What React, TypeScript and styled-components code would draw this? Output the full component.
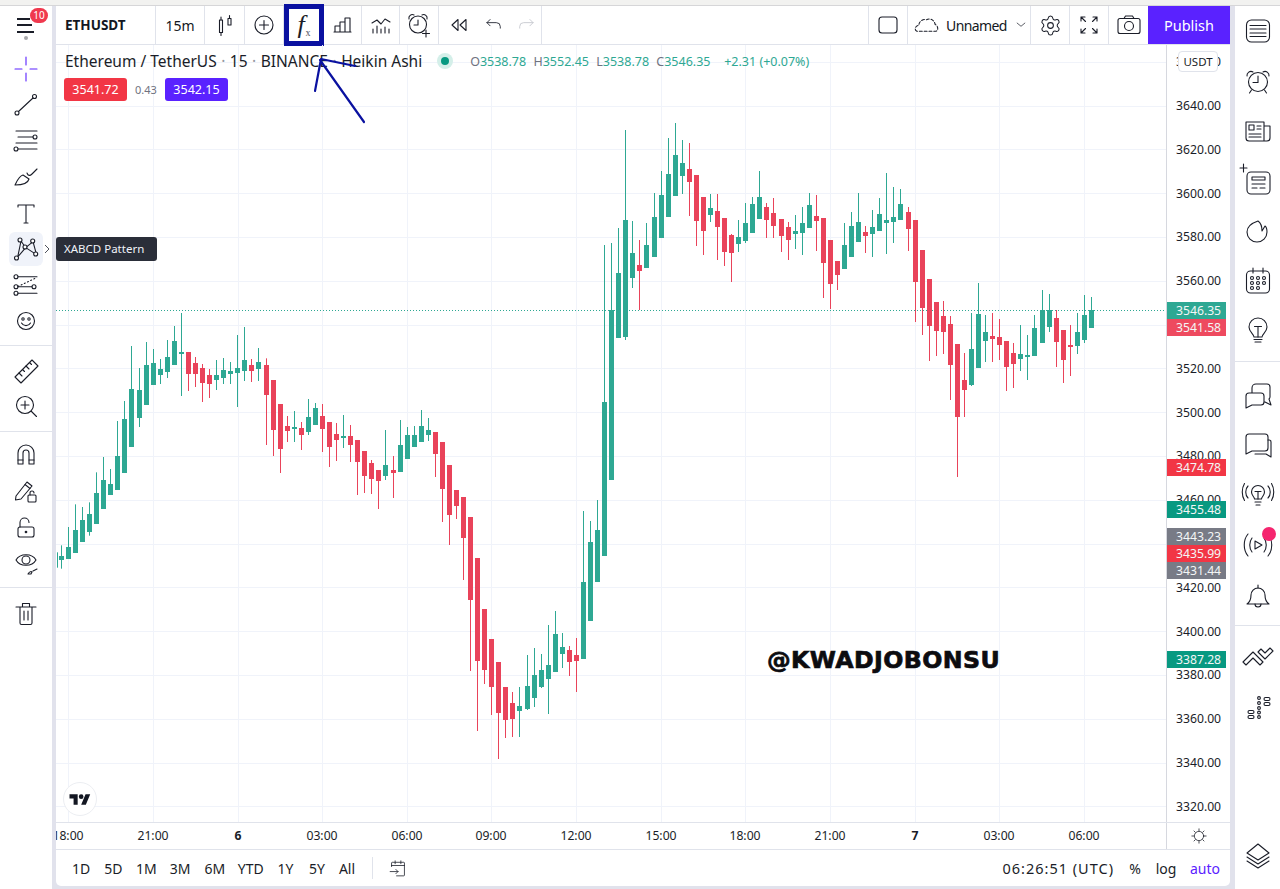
import React from "react";
import styled, { createGlobalStyle } from "styled-components";
import { Settings } from "lucide-react";

const Global = createGlobalStyle`
  html, body { margin: 0; padding: 0; background: #fff; }
  * { box-sizing: border-box; }
  body { font-family: "Noto Sans", "Open Sans", sans-serif; color: #131722; }
`;

const INK = "#1a1d28";
const GREEN = "#2ea893";
const RED = "#e9435a";

type Row = [number, number, number, number, number, number];
const seg = (ox: number, oy: number, rows: Row[]) =>
  rows.map(([x, h, t, b, l, d]) => ({
    x: Math.round(ox + x / 3),
    h: oy + h / 3,
    t: oy + t / 3,
    b: oy + b / 3,
    l: oy + l / 3,
    up: d === 1,
  }));

const candles = [
  ...seg(0, 380, [
    [170, 517, 540, 540, 563, 1], [184, 496, 528, 540, 566, 1], [205, 441, 501, 537, 537, 1], [226, 373, 450, 519, 519, 1],
    [247, 381, 420, 486, 486, 1], [268, 367, 402, 456, 467, 1], [289, 277, 339, 432, 432, 1], [310, 231, 300, 387, 387, 1],
    [331, 267, 312, 345, 345, 1], [352, 123, 228, 330, 330, 1],
  ]),
  ...seg(50, 300, [
    [223, 303, 357, 519, 519, 1], [244, 138, 267, 441, 441, 1], [268, 204, 270, 354, 381, 1], [289, 126, 195, 315, 315, 1],
    [310, 147, 189, 255, 255, 1], [331, 177, 207, 225, 252, 1], [352, 120, 171, 216, 234, 1], [373, 78, 123, 195, 195, 1],
    [394, 39, 156, 162, 288, 1], [415, 156, 156, 222, 273, 0], [436, 171, 189, 222, 261, 0], [457, 192, 204, 249, 306, 0],
    [478, 207, 225, 252, 294, 0], [499, 180, 225, 240, 270, 1], [520, 174, 210, 234, 252, 1], [541, 186, 213, 222, 252, 1],
    [562, 105, 204, 219, 321, 1], [583, 81, 180, 213, 243, 1], [604, 177, 195, 213, 246, 0], [625, 144, 186, 207, 243, 1],
    [649, 175, 195, 285, 435, 0], [670, 240, 240, 390, 468, 0], [691, 312, 312, 447, 519, 0], [712, 348, 378, 393, 426, 0],
    [733, 333, 381, 387, 426, 1], [754, 366, 384, 405, 450, 0], [775, 297, 351, 396, 405, 1], [796, 309, 324, 375, 375, 1],
    [817, 312, 348, 387, 456, 0], [838, 366, 366, 441, 501, 0], [859, 369, 402, 420, 483, 0], [880, 345, 408, 414, 444, 1],
  ]),
  ...seg(350, 400, [
    [1, 75, 108, 135, 186, 0], [22, 120, 120, 186, 285, 0], [43, 153, 153, 228, 279, 0], [64, 180, 189, 237, 282, 0],
    [85, 210, 210, 243, 327, 0], [106, 90, 195, 228, 240, 1], [130, 168, 210, 219, 294, 0], [151, 60, 135, 216, 216, 1],
    [172, 81, 105, 177, 177, 1], [193, 78, 105, 141, 141, 1], [214, 30, 78, 126, 126, 1], [235, 54, 90, 105, 123, 1],
    [256, 96, 96, 162, 231, 0], [277, 126, 126, 267, 366, 0], [298, 195, 195, 345, 435, 0], [319, 270, 270, 318, 357, 0],
    [340, 291, 291, 414, 540, 0], [361, 351, 351, 600, 813, 0], [382, 474, 474, 783, 993, 0], [403, 627, 627, 810, 852, 0],
    [424, 717, 717, 861, 945, 0], [445, 786, 786, 939, 1077, 0], [466, 861, 861, 960, 1014, 0], [487, 876, 909, 957, 1011, 0],
    [508, 861, 918, 933, 1011, 1], [532, 765, 858, 927, 930, 1], [553, 744, 825, 894, 921, 1], [574, 762, 810, 861, 864, 1],
    [595, 675, 795, 837, 942, 1], [616, 633, 702, 816, 816, 1], [637, 699, 741, 762, 804, 1], [658, 738, 750, 786, 828, 0],
    [679, 714, 765, 783, 876, 0], [700, 333, 546, 777, 777, 1], [721, 363, 426, 663, 663, 1], [742, 300, 390, 546, 546, 1],
  ]),
  ...seg(600, 110, [
    [13, 405, 876, 1338, 1338, 1], [34, 399, 600, 1110, 1110, 1], [55, 354, 489, 684, 684, 1], [76, 60, 330, 681, 690, 1],
    [97, 333, 429, 504, 534, 1], [118, 390, 465, 483, 600, 0], [139, 339, 405, 474, 474, 1], [163, 249, 321, 441, 441, 1],
    [184, 183, 255, 384, 384, 1], [205, 84, 192, 321, 321, 1], [226, 39, 135, 258, 258, 1], [247, 90, 159, 198, 252, 1],
    [268, 99, 177, 216, 318, 0], [289, 195, 195, 333, 408, 0], [310, 261, 261, 363, 435, 0], [331, 252, 294, 315, 336, 1],
    [352, 252, 303, 351, 450, 0], [373, 324, 324, 426, 468, 0], [394, 372, 375, 429, 516, 0], [415, 330, 381, 402, 426, 1],
    [436, 279, 339, 393, 399, 1], [457, 261, 282, 369, 369, 1], [478, 183, 261, 327, 327, 1], [499, 279, 291, 330, 384, 0],
    [520, 264, 309, 348, 384, 0], [544, 327, 327, 378, 426, 0], [565, 336, 351, 390, 450, 0], [586, 315, 363, 372, 417, 1],
    [607, 291, 339, 369, 435, 1], [628, 249, 285, 354, 354, 1], [649, 255, 318, 333, 423, 0], [670, 324, 324, 459, 564, 0],
    [691, 390, 390, 522, 597, 0], [712, 453, 453, 495, 540, 0], [733, 339, 405, 477, 477, 1], [754, 306, 348, 441, 441, 1],
    [775, 249, 336, 396, 396, 1], [796, 348, 366, 378, 429, 0], [817, 300, 351, 372, 441, 1], [838, 264, 312, 363, 363, 1],
    [859, 189, 330, 339, 432, 1], [880, 231, 321, 336, 399, 1], [901, 237, 282, 330, 330, 1], [925, 291, 306, 357, 423, 0],
    [946, 330, 330, 516, 636, 0],
  ]),
  ...seg(900, 270, [
    [67, -60, -60, 114, 195, 0], [88, 27, 27, 168, 273, 0], [109, 96, 96, 183, 258, 0], [130, 93, 138, 186, 252, 0],
    [151, 138, 162, 285, 390, 0], [172, 222, 222, 441, 621, 0], [193, 249, 330, 360, 441, 0], [214, 129, 237, 345, 348, 1],
    [235, 39, 132, 294, 294, 1], [256, 135, 186, 213, 276, 1], [277, 129, 198, 207, 276, 0], [298, 147, 201, 225, 270, 0],
    [319, 213, 213, 291, 363, 0], [340, 219, 249, 282, 354, 0], [361, 165, 252, 267, 303, 1], [382, 195, 255, 261, 330, 1],
    [403, 135, 174, 258, 258, 1], [427, 60, 120, 219, 219, 1], [448, 72, 120, 171, 186, 1], [469, 120, 144, 216, 291, 0],
    [490, 180, 180, 270, 339, 0], [511, 165, 225, 231, 318, 0], [532, 129, 186, 228, 252, 1], [553, 75, 135, 210, 219, 1],
    [574, 81, 120, 174, 174, 1],
  ]),
];

const priceY = (p: number) => 105.5 + ((3640 - p) / 20) * 43.8;
const gridPrices = [3660, 3640, 3620, 3600, 3580, 3560, 3540, 3520, 3500, 3480, 3460, 3440, 3420, 3400, 3380, 3360, 3340, 3320];
const prices = gridPrices.filter((p) => p !== 3540 && p !== 3440);
const times: [string, number, boolean][] = [
  ["18:00", 68, false], ["21:00", 153, false], ["6", 238, true], ["03:00", 322, false], ["06:00", 407, false],
  ["09:00", 491, false], ["12:00", 576, false], ["15:00", 661, false], ["18:00", 745, false], ["21:00", 830, false],
  ["7", 915, true], ["03:00", 999, false], ["06:00", 1084, false],
];
const badges: [string, number, string][] = [
  ["3546.35", 302, "#2ea893"], ["3541.58", 319, "#ee4a5f"], ["3474.78", 459, "#f23645"], ["3455.48", 501, "#089981"],
  ["3443.23", 528, "#787b86"], ["3435.99", 545, "#f23645"], ["3431.44", 562, "#787b86"], ["3387.28", 651, "#089981"],
];

const Page = styled.div`
  position: relative;
  width: 1280px;
  height: 889px;
  overflow: hidden;
  display: flex;
  flex-direction: column;
  background: #fff;
`;
const TopStrip = styled.div`
  height: 6px;
  flex: none;
  background: #f2f2f0;
  border-bottom: 1px solid #d6d6d8;
`;
const Columns = styled.div`
  flex: 1;
  display: flex;
  min-height: 0;
`;
const LeftBar = styled.aside`
  width: 52px;
  flex: none;
  display: flex;
  flex-direction: column;
  background: #fff;
`;
const MenuCell = styled.div`
  position: relative;
  height: 39px;
  display: flex;
  align-items: center;
  justify-content: flex-start;
  padding-left: 17px;
`;
const Burger = styled.div`
  display: flex;
  flex-direction: column;
  gap: 4.5px;
  margin-top: -1px;
  span {
    display: block;
    height: 2px;
    background: ${INK};
  }
  span:nth-child(1) { width: 13px; }
  span:nth-child(2) { width: 15px; }
  span:nth-child(3) { width: 17px; }
`;
const CountBadge = styled.span`
  position: absolute;
  left: 30px;
  top: 2px;
  width: 18px;
  height: 15px;
  border-radius: 8px;
  background: #f0384e;
  color: #fff;
  font-size: 10px;
  line-height: 15px;
  text-align: center;
`;
const GrayDot = styled.span`
  position: absolute;
  left: 24px;
  top: 30px;
  width: 4px;
  height: 4px;
  border-radius: 50%;
  background: #a8a8ac;
`;
const ToolGroup = styled.div<{ $top: number; $bottom: number; $line?: boolean }>`
  padding: ${(p) => p.$top}px 0 ${(p) => p.$bottom}px;
  border-bottom: ${(p) => (p.$line ? "1px solid #e0e3eb" : "none")};
`;
const ToolCell = styled.div<{ $active?: boolean }>`
  position: relative;
  height: 36px;
  display: flex;
  align-items: center;
  justify-content: center;
  &::before {
    content: "";
    position: absolute;
    left: 9px;
    top: 1px;
    width: 34px;
    height: 34px;
    border-radius: 6px;
    background: ${(p) => (p.$active ? "#f0f3fa" : "transparent")};
  }
  svg { position: relative; }
`;
const ToolArrow = styled.svg`
  position: absolute !important;
  left: 44px;
  top: 13px;
  width: 6px;
  height: 10px;
  fill: none;
  stroke: #50535e;
  stroke-width: 1;
`;
const Center = styled.div`
  flex: 1;
  display: flex;
  flex-direction: column;
  min-width: 0;
  padding: 0 5px 3px 4px;
  background: #e1e2ec;
`;
const TopBar = styled.header`
  height: 39px;
  flex: none;
  display: flex;
  align-items: stretch;
  background: #fff;
  border-bottom: 1px solid #e0e3eb;
`;
const BarCell = styled.div<{ $w: number; $plain?: boolean }>`
  position: relative;
  width: ${(p) => p.$w}px;
  flex: none;
  display: flex;
  align-items: center;
  justify-content: center;
  font-size: 14px;
  border-right: ${(p) => (p.$plain ? "none" : "1px solid #e0e3eb")};
`;
const LayoutCell = styled(BarCell)`
  justify-content: flex-start;
  gap: 5px;
  padding-left: 6px;
  letter-spacing: -0.6px;
`;
const Symbol = styled.span`
  font-weight: 700;
  font-size: 13.5px;
  width: 100%;
  padding-left: 9px;
`;
const Marker = styled.div`
  position: absolute;
  left: 0;
  right: 0;
  top: -2px;
  bottom: -2px;
  border: 5px solid #0a11a0;
`;
const Fx = styled.span`
  font-family: "Liberation Serif", serif;
  font-style: italic;
  font-size: 26px;
  line-height: 1;
  display: flex;
  align-items: flex-end;
  color: ${INK};
  small {
    font-style: normal;
    font-size: 10px;
    margin-left: 1px;
    color: #50535e;
  }
`;
const Spacer = styled.div`
  flex: 1;
  border-right: 1px solid #e0e3eb;
`;
const Publish = styled.div`
  width: 82px;
  flex: none;
  background: #5a22ff;
  color: #fff;
  font-size: 14.5px;
  display: flex;
  align-items: center;
  justify-content: center;
`;
const ChartRow = styled.div`
  height: 777px;
  flex: none;
  display: flex;
  background: #fff;
`;
const ChartPane = styled.div`
  position: relative;
  width: 1110px;
  flex: none;
  overflow: hidden;
`;
const ChartSvg = styled.svg`
  display: block;
  width: 1110px;
  height: 777px;
`;
const Legend = styled.div`
  position: absolute;
  left: 9px;
  top: 5px;
  height: 22px;
  display: flex;
  align-items: center;
  font-size: 15.5px;
  color: #1a1d28;
  white-space: nowrap;
`;
const Sep = styled.span`
  color: #9598a1;
  margin: 0 4.5px;
`;
const LiveDot = styled.span`
  width: 8px;
  height: 8px;
  border-radius: 50%;
  background: #089981;
  box-shadow: 0 0 0 4px #d4efe9;
  margin: 0 21px 0 19px;
`;
const Ohlc = styled.span`
  font-size: 12.5px;
  color: #2ea893;
  b { font-weight: 400; color: #6f7280; margin-left: 4px; }
  b:first-child { margin-left: 0; }
  i { font-style: normal; margin-left: 10.5px; }
`;
const QuoteRow = styled.div`
  position: absolute;
  left: 8px;
  top: 33px;
  display: flex;
  align-items: center;
`;
const Quote = styled.span<{ $bg: string }>`
  width: 63px;
  height: 23px;
  border-radius: 3px;
  background: ${(p) => p.$bg};
  color: #fff;
  font-size: 12.5px;
  line-height: 23px;
  text-align: center;
`;
const Spread = styled.span`
  width: 38px;
  text-align: center;
  font-size: 11px;
  color: #6f7280;
`;
const Watermark = styled.div`
  position: absolute;
  left: 711px;
  top: 600px;
  font-family: "DejaVu Sans", sans-serif;
  font-weight: 700;
  font-size: 23.7px;
  line-height: 30px;
  letter-spacing: 0.4px;
  color: #0c0c10;
  -webkit-text-stroke: 0.7px #0c0c10;
  white-space: nowrap;
`;
const LogoRound = styled.div`
  position: absolute;
  left: 7px;
  top: 737px;
  width: 34px;
  height: 34px;
  border-radius: 50%;
  background: #fff;
  border: 1px solid #eceef2;
  display: flex;
  align-items: center;
  justify-content: center;
`;
const Tip = styled.div`
  position: absolute;
  left: 0;
  top: 192px;
  width: 101px;
  height: 24px;
  background: #2a2e39;
  border-radius: 3px;
  color: #f0f3fa;
  font-size: 11.5px;
  line-height: 24px;
  padding-left: 8px;
  &::before {
    content: "";
    position: absolute;
    left: -4px;
    top: 8px;
    border-top: 4px solid transparent;
    border-bottom: 4px solid transparent;
    border-right: 4px solid #2a2e39;
  }
`;
const PriceAxis = styled.div`
  position: relative;
  flex: 1;
  border-left: 1px solid #d6d8df;
  overflow: hidden;
`;
const PriceTick = styled.span`
  position: absolute;
  left: 9px;
  font-size: 12.2px;
  line-height: 16px;
  color: ${INK};
`;
const PriceTag = styled.span<{ $bg: string }>`
  position: absolute;
  left: -1px;
  width: 60px;
  height: 17px;
  background: ${(p) => p.$bg};
  color: #f4f6f6;
  font-size: 12.2px;
  line-height: 17px;
  padding-left: 10px;
`;
const UnitButton = styled.span`
  position: absolute;
  left: 11px;
  top: 6px;
  width: 40px;
  height: 21px;
  background: #fff;
  border: 1px solid #e0e3eb;
  border-radius: 4px;
  font-size: 11.5px;
  line-height: 19px;
  text-align: center;
  color: ${INK};
`;
const TimeRow = styled.div`
  height: 27px;
  flex: none;
  display: flex;
  background: #fff;
  border-top: 1px solid #e0e3eb;
`;
const TimeScale = styled.div`
  position: relative;
  width: 1110px;
  flex: none;
  overflow: hidden;
`;
const TimeTick = styled.span<{ $bold: boolean }>`
  position: absolute;
  top: 5px;
  transform: translateX(-50%);
  font-size: 12.2px;
  line-height: 16px;
  font-weight: ${(p) => (p.$bold ? 700 : 400)};
  color: ${INK};
`;
const AxisCorner = styled.div`
  flex: 1;
  border-left: 1px solid #d6d8df;
  display: flex;
  align-items: center;
  justify-content: center;
`;
const BottomBar = styled.footer`
  flex: 1;
  display: flex;
  align-items: center;
  padding-left: 9px;
  background: #fff;
  border-top: 1px solid #e0e3eb;
  border-bottom-left-radius: 5px;
  border-bottom-right-radius: 5px;
  font-size: 14px;
  color: ${INK};
`;
const Range = styled.span<{ $w: number }>`
  width: ${(p) => p.$w}px;
  text-align: center;
`;
const BarRule = styled.span`
  width: 1px;
  height: 22px;
  margin-left: 10px;
  background: #e0e3eb;
`;
const BottomIcon = styled.span`
  margin-left: 15px;
  display: flex;
`;
const Clock = styled.span`
  margin-left: auto;
  margin-right: 4px;
  font-size: 14.5px;
  letter-spacing: 1px;
`;
const ScaleMode = styled.span<{ $w: number; $on?: boolean }>`
  width: ${(p) => p.$w}px;
  text-align: center;
  color: ${(p) => (p.$on ? "#5a22ff" : INK)};
`;
const RightBar = styled.aside`
  width: 45px;
  flex: none;
  display: flex;
  flex-direction: column;
  background: #fff;
`;
const SideGroup = styled.div<{ $top: number; $bottom: number; $line?: boolean }>`
  padding: ${(p) => p.$top}px 0 ${(p) => p.$bottom}px;
  border-bottom: ${(p) => (p.$line ? "1px solid #e0e3eb" : "none")};
`;
const SideFoot = styled.div`
  margin-top: auto;
  padding-bottom: 9px;
`;
const SideCell = styled.div`
  position: relative;
  height: 50px;
  display: flex;
  align-items: center;
  justify-content: center;
`;
const PinkDot = styled.span`
  position: absolute;
  left: 27px;
  top: 7px;
  width: 14px;
  height: 14px;
  border-radius: 50%;
  background: #f5256f;
`;
const ArrowsOverlay = styled.svg`
  position: absolute;
  left: 0;
  top: 0;
  width: 1280px;
  height: 889px;
  pointer-events: none;
  fill: none;
  stroke: #0a11a0;
  stroke-width: 2.2;
  stroke-linecap: round;
`;
const Glyph = styled.svg<{ $s?: number; $tone?: string }>`
  width: ${(p) => p.$s ?? 28}px;
  height: ${(p) => p.$s ?? 28}px;
  flex: none;
  overflow: visible;
  fill: none;
  stroke: ${(p) => p.$tone ?? INK};
  stroke-width: 1.1;
  stroke-linecap: round;
  stroke-linejoin: round;
`;

const I: React.FC<{ children: React.ReactNode; s?: number; tone?: string }> = ({ children, s, tone }) => (
  <Glyph viewBox="0 0 28 28" $s={s} $tone={tone}>
    {children}
  </Glyph>
);

const leftTop = [
  <I tone="#5a22ff"><path d="M14 2v8M14 18v8M3 14h7M18 14h7" /></I>,
  <I><circle cx="5" cy="22" r="2" /><circle cx="22.5" cy="5.5" r="2" /><path d="M6.5 20.5 21 7" /></I>,
  <I><path d="M4 4h21M6 10h15M4 16h21M6 22h19" /><circle cx="23" cy="10" r="2" /><circle cx="4" cy="22" r="2" /></I>,
  <I><path d="M3 22c2-4 4-9 8-10l6 4c-1 4-7 6-14 6Z" /><path d="M15 10c1 3 3 3 5 1l5-5" /></I>,
  <I><path d="M6 8V6h16v2M14 6v18M12 24h4" /></I>,
  <I><path d="M5.7 22 9 6l4.7 6.7L21 6.6l3.5 13-10.8-7L5.7 22Z" /><circle cx="4.5" cy="23" r="2" fill="#fff" /><circle cx="8" cy="5" r="2" fill="#fff" /><circle cx="20.7" cy="6" r="2" fill="#fff" /><circle cx="13" cy="12" r="2" fill="#fff" /><circle cx="23.7" cy="19" r="2" fill="#fff" /></I>,
  <I><path d="M6 5.7h19M6 15.7h14M6 22.3h19" /><path d="M6 15.5 24 7" strokeDasharray="1 2.5" /><circle cx="4" cy="5.7" r="2" /><circle cx="4" cy="15.7" r="2" /><circle cx="4" cy="22.3" r="2" /><circle cx="22" cy="15.7" r="2" /></I>,
  <I><circle cx="14" cy="14" r="8.5" /><circle cx="11" cy="12" r="1.2" /><circle cx="17" cy="12" r="1.2" /><path d="M9.5 16c2 3.5 7 3.5 9 0" /></I>,
];
const leftMid = [
  <I><path d="M3 20 20 3l6 6L9 26Z" /><path d="M7 16l3 3M10.5 12.5l2 2M14 9l3 3M17.5 5.5l2 2" /></I>,
  <I><circle cx="13" cy="12" r="8.5" /><path d="M13 8v8M9 12h8M19.5 18.5l5 5" /></I>,
];
const leftLow = [
  <I><path d="M6 23V12a8 8 0 0 1 16 0v11h-5V12a3 3 0 0 0-6 0v11Z" /><path d="M6 19h5M17 19h5" /></I>,
  <I><path d="M4 19 15 5l5 4L9 22l-5.500 1Z" /><path d="M13 7.500l5 4" /><rect x="16" y="18" width="8" height="7" rx="1" fill="#fff" /><path d="M18 18v-2a2 2 0 0 1 4 0" /></I>,
  <I><rect x="6" y="14" width="16" height="10" rx="2" /><path d="M8 14V9.500a4.500 4.500 0 0 1 9 0" /><circle cx="14" cy="19" r="0.8" fill={INK} /></I>,
  <I><path d="M4 11c4-7 16-7 20 0-4 7-16 7-20 0Z" /><circle cx="14" cy="11" r="4" /><path d="M16 25c1-2 3-3 4-2l-1 2ZM21 22l4-2" /></I>,
];
const rightTop = [
  <I><rect x="2.500" y="3" width="23" height="22" rx="5" /><path d="M6 8.500h16M6 12h16M6 16h16M6 19.500h16" /></I>,
  <I><circle cx="14" cy="15" r="9.500" /><path d="M14 9v6.500H9M3 9a4 4 0 0 1 6-4M25 9a4 4 0 0 0-6-4M7.500 23l-2 3M20.500 23l2 3" /></I>,
  <I><path d="M2 5h18v19H5a3 3 0 0 1-3-3ZM20 9h6v12a3 3 0 0 1-3 3h-3" /><rect x="5" y="8" width="5" height="5" /><path d="M13 9h4M13 12h4M5 17h12M5 20h12" /></I>,
  <I><rect x="3" y="5" width="23" height="22" rx="4" /><path d="M8 10h13v3H8ZM8 17h13M8 21h5M16 21h5M-4 1h7M-.5 -3v8" /></I>,
  <I><path d="M14 4c-6 2-11 5-11 11a10 10 0 0 0 20 0c0-2-.6-5-2-6l-3 5c0-4-1-8-4-10Z" /></I>,
  <I><rect x="2.500" y="4" width="23" height="22" rx="4" /><path d="M9 1v5M19 1v5" /><circle cx="8" cy="11" r="1.500" /><circle cx="14" cy="11" r="1.500" /><circle cx="20" cy="11" r="1.500" /><circle cx="8" cy="16" r="1.500" /><circle cx="14" cy="16" r="1.500" /><circle cx="20" cy="16" r="1.500" /><circle cx="8" cy="21" r="1.500" /><circle cx="14" cy="21" r="1.500" /></I>,
  <I><path d="M10 20c0-3-5-5-5-10a9 9 0 0 1 18 0c0 5-5 7-5 10Z" /><path d="M10.500 9.500h7M14 9.500V20M10 22.500h8M11 25h6" /></I>,
];
const rightMid = [
  <I><path d="M8 12V7a4 4 0 0 1 4-4h11a3 3 0 0 1 3 3v10a3 3 0 0 1-1 2l2 6-6-3H12" /><path d="M2 15a3 3 0 0 1 3-3h12a3 3 0 0 1 3 3v6a3 3 0 0 1-3 3H8l-6 3Z" fill="#fff" /></I>,
  <I><path d="M8 20h13a3 3 0 0 0 3-3V6a3 3 0 0 0-3-3H5a3 3 0 0 0-3 3v17l6-3" /><path d="M24 9h1a2 2 0 0 1 2 2v15l-5-3H11" /></I>,
  <I><path d="M10.500 17c0-2-3-3.500-3-7a6.500 6.500 0 0 1 13 0c0 3.500-3 5-3 7Z" transform="translate(0 1)" /><path d="M11 10.500h6M14 10.500V18M11 21h6M12 24h4M4 5c-3 3-3 9 0 12M0.500 2.500c-3 5-3 12 0 17M24 5c3 3 3 9 0 12M27.500 2.500c3 5 3 12 0 17" /></I>,
  <I><path d="M11 10v8l7-4ZM4 3C-1 9-1 19 4 25M8 7c-3 4-3 10 0 14M24 3c5 6 5 16 0 22M20 7c3 4 3 10 0 14" /></I>,
  <I><path d="M3 23h22c-3-2-4-5-4-9a7 7 0 0 0-14 0c0 4-1 7-4 9Z" /><path d="M11 23a3 3 0 0 0 6 0M14 7V4" /></I>,
];
const rightLow = [
  <I><path d="M-1 18 9 8l10 10-3 3-7-7-7 7ZM14 8l3-3 4 4 5-5 3 3-8 8Z" /></I>,
  <I><rect x="4" y="16.500" width="6" height="3" rx="1.500" /><rect x="4" y="21.500" width="6" height="3" rx="1.500" /><circle cx="15" cy="4" r="1.400" /><circle cx="15" cy="9" r="1.400" /><circle cx="15" cy="14" r="1.400" /><circle cx="15" cy="18.500" r="1.400" /><circle cx="15" cy="23" r="1.400" /><rect x="20" y="3.500" width="6" height="3" rx="1.500" /><rect x="20" y="8.500" width="6" height="3" rx="1.500" /></I>,
];

const ranges: [string, number][] = [
  ["1D", 32], ["5D", 32.5], ["1M", 33.5], ["3M", 34], ["6M", 35.5], ["YTD", 36.5], ["1Y", 33], ["5Y", 30], ["All", 30],
];

export default function App() {
  return (
    <Page>
      <Global />
      <TopStrip />
      <Columns>
        <LeftBar>
          <MenuCell>
            <Burger><span /><span /><span /></Burger>
            <CountBadge>10</CountBadge>
            <GrayDot />
          </MenuCell>
          <ToolGroup $top={6} $bottom={6} $line>
            {leftTop.map((ic, i) => (
              <ToolCell key={i} $active={i === 5}>
                {ic}
                {i === 5 && (
                  <ToolArrow viewBox="0 0 6 10"><path d="M1 1l4 4-4 4" /></ToolArrow>
                )}
              </ToolCell>
            ))}
          </ToolGroup>
          <ToolGroup $top={7} $bottom={6} $line>
            {leftMid.map((ic, i) => <ToolCell key={i}>{ic}</ToolCell>)}
          </ToolGroup>
          <ToolGroup $top={5} $bottom={6} $line>
            {leftLow.map((ic, i) => <ToolCell key={i}>{ic}</ToolCell>)}
          </ToolGroup>
          <ToolGroup $top={7} $bottom={0}>
            <ToolCell>
              <I><path d="M4 8h20M8 8v16a1.500 1.500 0 0 0 1.500 1.500h9A1.500 1.500 0 0 0 20 24V8M10.500 8V4.500h7V8M12 12v9M16 12v9" /></I>
            </ToolCell>
          </ToolGroup>
        </LeftBar>
        <Center>
          <TopBar>
            <BarCell $w={100}><Symbol>ETHUSDT</Symbol></BarCell>
            <BarCell $w={49}>15m</BarCell>
            <BarCell $w={40}><I><path d="M10 6v3M18.500 4.500v3M10 21.500v3" /><rect x="8.500" y="9" width="3" height="12.500" /><rect x="17" y="7.500" width="3" height="6.500" /></I></BarCell>
            <BarCell $w={39}><I><circle cx="14" cy="14" r="9" /><path d="M14 9.500v9M9.500 14h9" /></I></BarCell>
            <BarCell $w={40} $plain><Fx>f<small>x</small></Fx><Marker /></BarCell>
            <BarCell $w={38}><I><path d="M6 21v-6h5v6M11 21V11h5v10M16 21V7h5v14M5 21h17" /></I></BarCell>
            <BarCell $w={38}><I><path d="M5 12l5-3 4 4 4-5 5 3M6 18v4M10 15v7M14 18v4M18 16v6M22 18v4" /></I></BarCell>
            <BarCell $w={39}><I><circle cx="13" cy="13.500" r="8.500" /><path d="M13 9v5H9M4 8a3.500 3.500 0 0 1 5-4M22 8a3.500 3.500 0 0 0-5-4M21 19v7M17.500 22.500h7" /></I></BarCell>
            <BarCell $w={39} $plain><I><path d="M13 8.500 7 14l6 5.500ZM21 8.500 15 14l6 5.500Z" /></I></BarCell>
            <BarCell $w={32} $plain><I s={22}><path d="M9 7 5 11l4 4M5 11h12a5 5 0 0 1 5 5v2" /></I></BarCell>
            <BarCell $w={32}><I s={22} tone="#c3c5cc"><path d="M19 7l4 4-4 4M23 11H11a5 5 0 0 0-5 5v2" /></I></BarCell>
            <Spacer />
            <BarCell $w={39}><I><rect x="5" y="6" width="18" height="16" rx="3" /></I></BarCell>
            <LayoutCell $w={123}>
              <I s={27}><path d="M3 20c-3-1-2-6 2-6 0-4 4-7 8-6 3-2 8 0 9 5 3 1 4 7 0 7H3Z" strokeDasharray="3 2" /></I>
              <span>Unnamed</span>
              <I s={18}><path d="M8 11l6 5 6-5" /></I>
            </LayoutCell>
            <BarCell $w={39}><Settings size={23} strokeWidth={1.1} color={INK} /></BarCell>
            <BarCell $w={39}><I><path d="M6 10V6h4M6 6l4.500 4.500M22 10V6h-4M22 6l-4.500 4.500M6 18v4h4M6 22l4.500-4.500M22 18v4h-4M22 22l-4.500-4.500" /></I></BarCell>
            <BarCell $w={39} $plain><I><rect x="3" y="7.500" width="22" height="15" rx="2" /><circle cx="14" cy="15" r="4.500" /><path d="M9 7.500l1.500-2.500h7L19 7.500" /></I></BarCell>
            <Publish>Publish</Publish>
          </TopBar>
          <ChartRow>
            <ChartPane>
              <ChartSvg viewBox="56 45 1110 777">
                {gridPrices.map((p) => (
                  <line key={p} x1={56} x2={1166} y1={Math.round(priceY(p)) + 0.5} y2={Math.round(priceY(p)) + 0.5} stroke="#f0f3fa" />
                ))}
                {times.map(([t, x], i) => (
                  <line key={t + i} x1={x + 0.5} x2={x + 0.5} y1={45} y2={822} stroke="#f0f3fa" />
                ))}
                <line x1={56} x2={1166} y1={310.5} y2={310.5} stroke="#2ea893" strokeDasharray="1 2" />
                {candles.map((c, i) => {
                  const col = c.up ? GREEN : RED;
                  return (
                    <g key={i} fill={col}>
                      <rect x={c.x} y={c.h} width={1} height={Math.max(0, c.l - c.h)} />
                      {c.b > c.t && <rect x={c.x - 2} y={c.t} width={5} height={c.b - c.t} />}
                    </g>
                  );
                })}
              </ChartSvg>
              <Legend>
                <span>Ethereum / TetherUS</span><Sep>·</Sep>
                <span>15</span><Sep>·</Sep>
                <span>BINANCE</span><Sep>·</Sep>
                <span>Heikin Ashi</span>
                <LiveDot />
                <Ohlc>
                  <b>O</b>3538.78 <b>H</b>3552.45 <b>L</b>3538.78 <b>C</b>3546.35 <i>+2.31 (+0.07%)</i>
                </Ohlc>
              </Legend>
              <QuoteRow>
                <Quote $bg="#f23645">3541.72</Quote>
                <Spread>0.43</Spread>
                <Quote $bg="#5a22ff">3542.15</Quote>
              </QuoteRow>
              <Tip>XABCD Pattern</Tip>
              <Watermark>@KWADJOBONSU</Watermark>
              <LogoRound>
                <svg width="22" height="14" viewBox="0 0 36 24" fill="#131722">
                  <path d="M14 22H7V11H0V4h14v18ZM28 22h-8l7.500-18h8L28 22Z" />
                  <circle cx="20" cy="8" r="4" />
                </svg>
              </LogoRound>
            </ChartPane>
            <PriceAxis>
              {prices.map((p) => (
                <PriceTick key={p} style={{ top: priceY(p) - 45 - 7.5 }}>{p.toFixed(2)}</PriceTick>
              ))}
              <UnitButton>USDT</UnitButton>
              {badges.map(([t, y, c]) => (
                <PriceTag key={t} $bg={c} style={{ top: y - 45 }}>{t}</PriceTag>
              ))}
            </PriceAxis>
          </ChartRow>
          <TimeRow>
            <TimeScale>
              {times.map(([t, x, b], i) => (
                <TimeTick key={t + i} $bold={b} style={{ left: x - 56 }}>{t}</TimeTick>
              ))}
            </TimeScale>
            <AxisCorner>
              <I s={20}><circle cx="14" cy="14" r="6.500" /><path d="M14 4v2.500M14 21.500V24M4 14h2.500M21.500 14H24M7 7l1.800 1.800M19.200 19.200 21 21M21 7l-1.800 1.800M8.800 19.200 7 21" /></I>
            </AxisCorner>
          </TimeRow>
          <BottomBar>
            {ranges.map(([r, w]) => <Range key={r} $w={w}>{r}</Range>)}
            <BarRule />
            <BottomIcon>
              <I s={20}><path d="M5 12V7a1 1 0 0 1 1-1h16a1 1 0 0 1 1 1v17a1 1 0 0 1-1 1H12M5 10.500h18M10 4v4M18 4v4M3 19h11M11 16l3 3-3 3" /></I>
            </BottomIcon>
            <Clock>06:26:51 (UTC)</Clock>
            <ScaleMode $w={34}>%</ScaleMode>
            <ScaleMode $w={28}>log</ScaleMode>
            <ScaleMode $w={50} $on>auto</ScaleMode>
          </BottomBar>
        </Center>
        <RightBar>
          <SideGroup $top={0} $bottom={5} $line>
            {rightTop.map((ic, i) => <SideCell key={i}>{ic}</SideCell>)}
          </SideGroup>
          <SideGroup $top={8} $bottom={5} $line>
            {rightMid.map((ic, i) => (
              <SideCell key={i}>{ic}{i === 3 && <PinkDot />}</SideCell>
            ))}
          </SideGroup>
          <SideGroup $top={7} $bottom={0}>
            {rightLow.map((ic, i) => <SideCell key={i}>{ic}</SideCell>)}
          </SideGroup>
          <SideFoot>
            <SideCell>
              <I><path d="M14 3 25 12 14 19 3 12ZM3 16l11 7 11-7M3 20l11 7 11-7" /></I>
            </SideCell>
          </SideFoot>
        </RightBar>
      </Columns>
      <ArrowsOverlay viewBox="0 0 1280 889">
        <path d="M364 122 320 60M315 91 321 59M355 66 321 59" />
      </ArrowsOverlay>
    </Page>
  );
}
